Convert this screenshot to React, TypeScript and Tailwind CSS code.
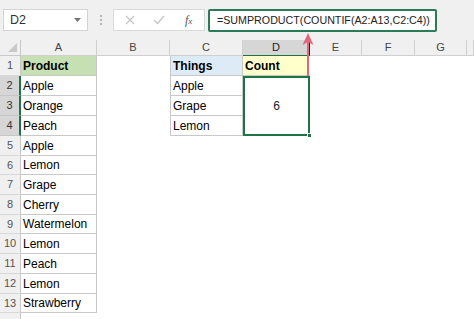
import React from "react";

const font = { fontFamily: '"Liberation Sans", Arial, sans-serif' };

const rowHeights = [20, 20, 20, 20, 20, 19, 20, 20, 19, 20, 20, 20, 19, 20];
const products = [
  "Product",
  "Apple",
  "Orange",
  "Peach",
  "Apple",
  "Lemon",
  "Grape",
  "Cherry",
  "Watermelon",
  "Lemon",
  "Peach",
  "Lemon",
  "Strawberry",
];
const things = ["Things", "Apple", "Grape", "Lemon"];
const cols = ["A", "B", "C", "D", "E", "F", "G", ""];

export default function App() {
  return (
    <div
      className="relative w-[474px] h-[319px] overflow-hidden bg-white text-black"
      style={font}
    >
      {/* Formula bar area */}
      <div className="flex h-[40px] items-start bg-[#f0f0f0] pt-[9px] pl-[3px]">
        <div className="flex h-[22px] w-[85px] items-center justify-between border border-[#d4d4d4] bg-white pl-[6px] pr-[6px] text-[12.5px] text-[#333]">
          <span>D2</span>
          <svg width="7" height="4" viewBox="0 0 7 4">
            <path d="M0 0 L7 0 L3.5 4 Z" fill="#777" />
          </svg>
        </div>
        <div className="flex h-[22px] w-[25px] flex-col items-center justify-center gap-[2px]">
          <span className="block h-[2px] w-[2px] bg-[#b5b5b5]" />
          <span className="block h-[2px] w-[2px] bg-[#b5b5b5]" />
          <span className="block h-[2px] w-[2px] bg-[#b5b5b5]" />
        </div>
        <div className="flex h-[22px] w-[92px] items-center border border-[#d9d9d9] bg-white">
          <svg className="ml-[11px]" width="10" height="10" viewBox="0 0 10 10">
            <path d="M1 1 L9 9 M9 1 L1 9" stroke="#c4c4c4" strokeWidth="1.2" />
          </svg>
          <svg className="ml-[18px]" width="12" height="10" viewBox="0 0 12 10">
            <path d="M1 5 L4.5 8.5 L11 1" stroke="#c4c4c4" strokeWidth="1.3" fill="none" />
          </svg>
          <span
            className="ml-[20px] text-[12px] italic text-[#555]"
            style={{ fontFamily: '"Liberation Serif", serif' }}
          >
            f<span className="text-[9px]">x</span>
          </span>
        </div>
        <div className="ml-[3px] flex h-[23px] w-[229px] items-center rounded-[2px] border-2 border-[#2d7a58] bg-white pl-[7px] text-[10.7px] text-[#222]">
          =SUMPRODUCT(COUNTIF(A2:A13,C2:C4))
        </div>
      </div>

      {/* Sheet grid */}
      <div
        className="grid grid-cols-[21px_76px_73px_73px_67px_52px_53px_52px_1fr]"
        style={{ gridTemplateRows: `16px ${rowHeights.map((h) => h + "px").join(" ")}` }}
      >
        {/* corner */}
        <div className="flex items-end justify-end border-r border-b border-[#c8c8c8] bg-[#f0f0f0] pr-[3px] pb-[3px]">
          <svg width="9" height="9" viewBox="0 0 9 9">
            <path d="M9 0 L9 9 L0 9 Z" fill="#c8c8c8" />
          </svg>
        </div>
        {cols.map((c, i) => (
          <div
            key={"h" + i}
            className={
              "flex items-center justify-center border-r border-b text-[11px] " +
              (c === "D"
                ? "bg-[#d6d6d6] border-b-[#217346] text-[#222]"
                : "bg-[#f0f0f0] border-[#d0d0d0] text-[#444]")
            }
          >
            {c}
          </div>
        ))}

        {rowHeights.map((_, r) => {
          const rowNum = r + 1;
          const sel = rowNum >= 2 && rowNum <= 4;
          const cells: React.ReactNode[] = [];
          cells.push(
            <div
              key={"rn" + r}
              className={
                "flex items-center justify-center border-b text-[11px] " +
                (sel
                  ? "bg-[#d6d6d6] border-b-[#c6c6c6] border-r-2 border-r-[#217346] text-[#333]"
                  : "bg-[#f0f0f0] border-b-[#d8d8d8] border-r border-r-[#c8c8c8] text-[#555]")
              }
              style={{ gridColumn: 1, gridRow: rowNum + 1 }}
            >
              {rowNum <= 13 ? rowNum : ""}
            </div>
          );
          if (rowNum <= 13) {
            cells.push(
              <div
                key={"a" + r}
                className={
                  "flex items-center border-r border-b border-[#c8c8c8] pl-[2px] text-[12px] " +
                  (rowNum === 1 ? "bg-[#c6e0b4] font-bold" : "bg-white")
                }
                style={{ gridColumn: 2, gridRow: rowNum + 1 }}
              >
                {products[r]}
              </div>
            );
          }
          if (rowNum <= 4) {
            cells.push(
              <div
                key={"c" + r}
                className={
                  "flex items-center border-l border-r border-b border-[#c8c8c8] pl-[2px] text-[12px] " +
                  (rowNum === 1 ? "bg-[#ddebf7] font-bold" : "bg-white")
                }
                style={{ gridColumn: 4, gridRow: rowNum + 1 }}
              >
                {things[r]}
              </div>
            );
          }
          return cells;
        })}

        {/* D1 */}
        <div
          className="flex items-center border-b border-[#c8c8c8] bg-[#ffffcc] pl-[2px] text-[12px] font-bold"
          style={{ gridColumn: 5, gridRow: 2 }}
        >
          Count
        </div>
        {/* D2:D4 merged & selected */}
        <div
          className="relative flex items-center justify-center border-2 border-[#217346] bg-white text-[12px] text-[#222]"
          style={{ gridColumn: 5, gridRow: "3 / span 3" }}
        >
          6
          <span className="absolute -right-[4px] -bottom-[4px] h-[5px] w-[5px] border border-white bg-[#217346]" />
        </div>
      </div>

      {/* Red annotation arrow */}
      <svg
        className="absolute left-[300px] top-[31px]"
        width="16"
        height="46"
        viewBox="0 0 16 46"
      >
        <line x1="8" y1="6" x2="8" y2="45" stroke="#e3677b" strokeWidth="2" />
        <path d="M8 2 L13.5 14 L8 11 L2.5 14 Z" fill="#e3677b" />
      </svg>
    </div>
  );
}
